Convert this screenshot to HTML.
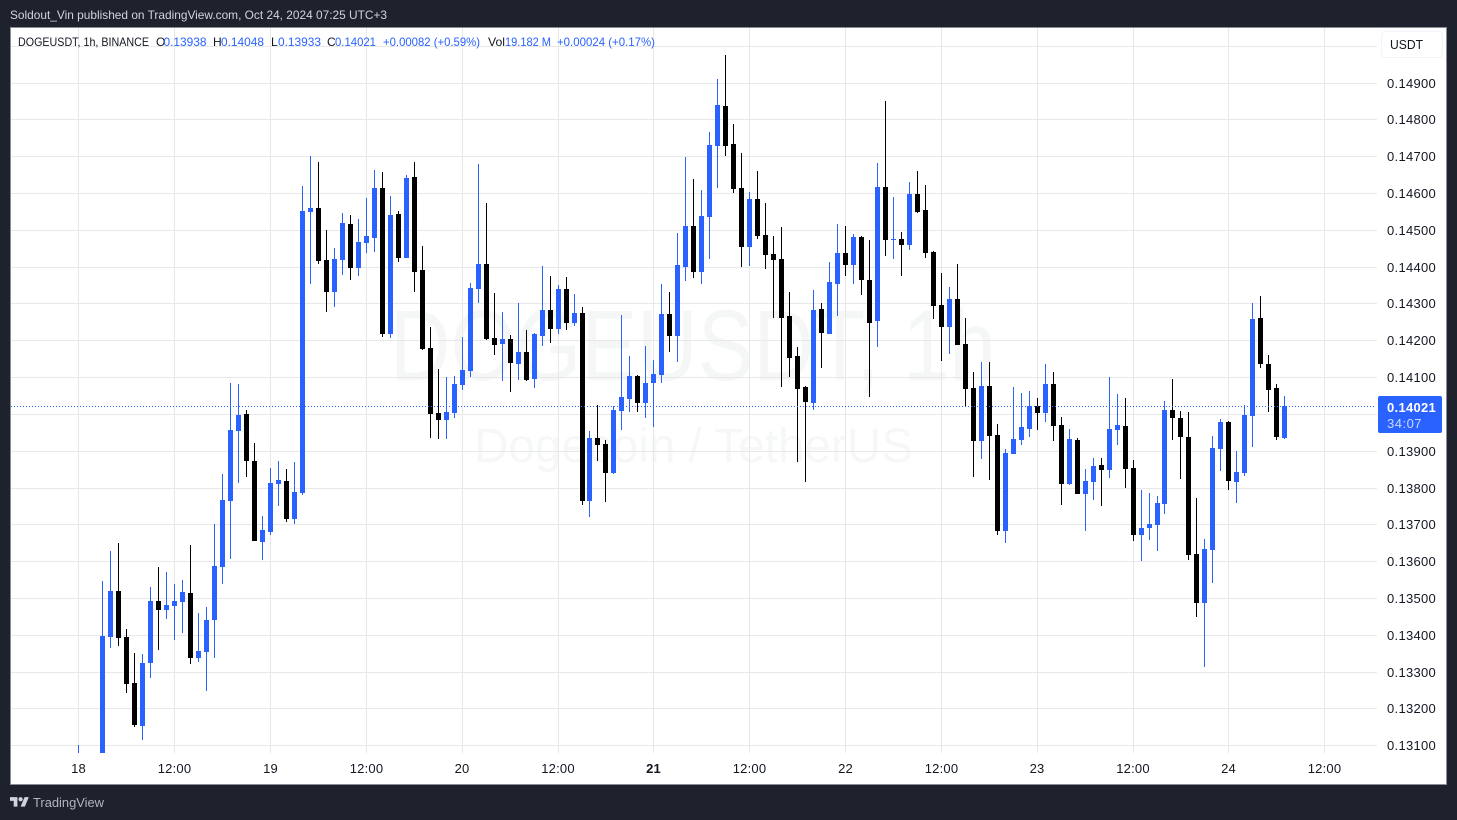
<!DOCTYPE html>
<html lang="en"><head><meta charset="utf-8"><title>DOGEUSDT</title>
<style>
html,body{margin:0;padding:0;background:#1e222d;width:1457px;height:820px;overflow:hidden}
svg{position:absolute;left:0;top:0;display:block}
text{font-family:"Liberation Sans",Arial,sans-serif}
.p{font-size:13px;fill:#131722;letter-spacing:.3px}
.t{font-size:13px;fill:#131722;text-anchor:middle;letter-spacing:.2px}
.l{font-size:12px;fill:#131722}
.v{font-size:12px;fill:#2962ff}
</style></head>
<body>
<svg width="1457" height="820" viewBox="0 0 1457 820">
<rect width="1457" height="820" fill="#1e222d"/>
<text x="10" y="19" font-size="12" fill="#d1d4dc" textLength="377" lengthAdjust="spacingAndGlyphs">Soldout_Vin published on TradingView.com, Oct 24, 2024 07:25 UTC+3</text>
<rect x="10.5" y="27.5" width="1436" height="757" fill="#fff" stroke="#8a8d95"/>

<!-- watermark -->
<text x="390" y="380" font-size="100" fill="#f5f7f7" textLength="606" lengthAdjust="spacingAndGlyphs">DOGEUSDT, 1h</text>
<text x="474" y="462" font-size="48" fill="#f6f8f8" textLength="439" lengthAdjust="spacingAndGlyphs">Dogecoin / TetherUS</text>

<!-- grid -->
<path shape-rendering="crispEdges" stroke="#e8e8e8" stroke-width="1" fill="none" d="M11 46.5H1377M11 83.5H1377M11 119.5H1377M11 156.5H1377M11 193.5H1377M11 230.5H1377M11 267.5H1377M11 303.5H1377M11 340.5H1377M11 377.5H1377M11 414.5H1377M11 451.5H1377M11 488.5H1377M11 524.5H1377M11 561.5H1377M11 598.5H1377M11 635.5H1377M11 672.5H1377M11 708.5H1377M11 745.5H1377M78.5 28V753M174.5 28V753M270.5 28V753M366.5 28V753M462.5 28V753M558.5 28V753M653.5 28V753M749.5 28V753M845.5 28V753M941.5 28V753M1037.5 28V753M1133.5 28V753M1228.5 28V753M1324.5 28V753"/>

<!-- blue wicks -->
<path shape-rendering="crispEdges" stroke="#2962ff" stroke-width="1" fill="none" d="M78.5 745V753M102.5 581V753M110.5 551V648M142.5 654V740M150.5 587V678M166.5 572V619M174.5 584V640M182.5 580V633M198.5 613V662M206.5 607V691M214.5 524V658M222.5 474V584M230.5 383V559M238.5 384V483M262.5 516V560M270.5 468V535M278.5 461V506M294.5 462V524M302.5 186V495M310.5 156V284M334.5 248V307M342.5 213V275M358.5 219V276M366.5 198V253M374.5 170V252M390.5 196V338M406.5 175V258M446.5 377V439M454.5 376V418M462.5 337V390M470.5 283V377M478.5 164V303M502.5 312V381M518.5 303V380M534.5 333V388M542.5 266V346M558.5 285V334M574.5 294V326M589.5 431V517M613.5 406V474M621.5 315V430M629.5 356V412M645.5 346V418M653.5 360V427M661.5 284V383M677.5 233V362M685.5 157V281M701.5 190V284M709.5 132V259M717.5 79V188M749.5 192V266M813.5 290V410M829.5 262V334M837.5 224V316M853.5 234V284M877.5 163V347M893.5 197V259M909.5 182V250M949.5 287V354M981.5 362V459M1005.5 449V543M1013.5 387V454M1021.5 393V445M1029.5 391V437M1045.5 364V422M1069.5 429V485M1085.5 469V531M1093.5 458V500M1109.5 377V478M1117.5 394V445M1141.5 490V561M1149.5 493V540M1157.5 496V551M1164.5 401V514M1204.5 539V667M1212.5 436V583M1220.5 419V471M1236.5 451V503M1244.5 405V476M1252.5 303V447M1284.5 396V439"/>
<!-- blue bodies -->
<path shape-rendering="crispEdges" fill="#2962ff" d="M100 636h5v117h-5zM108 591h5v46h-5zM140 663h5v63h-5zM148 601h5v62h-5zM164 605h5v5h-5zM172 601h5v5h-5zM180 592h5v10h-5zM196 651h5v7h-5zM204 620h5v32h-5zM212 566h5v54h-5zM220 500h5v67h-5zM228 430h5v71h-5zM236 415h5v16h-5zM260 530h5v12h-5zM268 483h5v49h-5zM276 480h5v4h-5zM292 492h5v27h-5zM300 211h5v282h-5zM308 208h5v4h-5zM332 259h5v33h-5zM340 223h5v37h-5zM356 242h5v26h-5zM364 236h5v7h-5zM372 188h5v50h-5zM388 215h5v119h-5zM404 178h5v80h-5zM444 412h5v8h-5zM452 384h5v29h-5zM460 370h5v15h-5zM468 288h5v83h-5zM476 264h5v25h-5zM500 339h5v5h-5zM516 352h5v12h-5zM532 334h5v45h-5zM540 310h5v26h-5zM556 289h5v40h-5zM572 313h5v10h-5zM587 438h5v63h-5zM611 410h5v63h-5zM619 397h5v14h-5zM627 376h5v23h-5zM643 383h5v20h-5zM651 374h5v9h-5zM659 314h5v61h-5zM675 265h5v71h-5zM683 226h5v41h-5zM699 216h5v56h-5zM707 145h5v72h-5zM715 105h5v41h-5zM747 199h5v48h-5zM811 310h5v93h-5zM827 282h5v52h-5zM835 253h5v31h-5zM851 237h5v28h-5zM875 187h5v134h-5zM891 239h5v1h-5zM907 194h5v51h-5zM947 299h5v28h-5zM979 386h5v55h-5zM1003 453h5v78h-5zM1011 439h5v15h-5zM1019 427h5v13h-5zM1027 406h5v23h-5zM1043 384h5v29h-5zM1067 439h5v45h-5zM1083 481h5v13h-5zM1091 466h5v16h-5zM1107 429h5v41h-5zM1115 425h5v5h-5zM1139 528h5v7h-5zM1147 524h5v4h-5zM1155 503h5v22h-5zM1162 410h5v94h-5zM1202 549h5v54h-5zM1210 448h5v102h-5zM1218 422h5v27h-5zM1234 472h5v10h-5zM1242 415h5v58h-5zM1250 319h5v97h-5zM1282 406h5v32h-5z"/>

<!-- black wicks -->
<path shape-rendering="crispEdges" stroke="#000" stroke-width="1" fill="none" d="M118.5 543V646M126.5 629V693M134.5 653V727M158.5 567V650M190.5 545V664M246.5 410V477M254.5 443V541M286.5 469V522M318.5 162V264M326.5 230V312M350.5 215V280M382.5 172V337M398.5 211V262M414.5 162V292M422.5 246V350M430.5 327V438M438.5 369V439M486.5 203V340M494.5 293V355M510.5 335V392M526.5 330V381M550.5 276V343M566.5 277V330M582.5 307V505M597.5 405V461M605.5 440V502M637.5 375V412M669.5 292V352M693.5 179V278M725.5 55V156M733.5 124V193M741.5 153V267M757.5 171V239M765.5 203V269M773.5 236V318M781.5 227V387M789.5 292V377M797.5 347V462M805.5 386V482M821.5 303V368M845.5 226V276M861.5 236V295M869.5 240V397M885.5 101V256M901.5 232V276M917.5 171V213M925.5 185V258M933.5 251V319M941.5 273V361M957.5 264V345M965.5 318V407M973.5 372V477M989.5 362V480M997.5 424V535M1037.5 398V430M1053.5 372V441M1061.5 417V505M1077.5 438V494M1101.5 458V506M1125.5 398V488M1133.5 460V541M1172.5 379V440M1180.5 411V479M1188.5 412V560M1196.5 498V617M1228.5 421V490M1260.5 296V368M1268.5 355V412M1276.5 384V440"/>
<!-- black bodies -->
<path shape-rendering="crispEdges" fill="#000" d="M116 591h5v47h-5zM124 637h5v47h-5zM132 683h5v42h-5zM156 601h5v9h-5zM188 593h5v65h-5zM244 414h5v47h-5zM252 461h5v80h-5zM284 481h5v38h-5zM316 208h5v53h-5zM324 260h5v32h-5zM348 224h5v44h-5zM380 188h5v146h-5zM396 214h5v44h-5zM412 177h5v95h-5zM420 270h5v79h-5zM428 348h5v66h-5zM436 413h5v7h-5zM484 264h5v75h-5zM492 338h5v7h-5zM508 339h5v24h-5zM524 352h5v28h-5zM548 310h5v19h-5zM564 289h5v34h-5zM580 313h5v188h-5zM595 438h5v7h-5zM603 444h5v29h-5zM635 376h5v27h-5zM667 314h5v22h-5zM691 226h5v46h-5zM723 106h5v40h-5zM731 144h5v45h-5zM739 188h5v59h-5zM755 199h5v37h-5zM763 235h5v20h-5zM771 254h5v6h-5zM779 259h5v59h-5zM787 316h5v42h-5zM795 356h5v33h-5zM803 387h5v15h-5zM819 309h5v24h-5zM843 253h5v12h-5zM859 237h5v43h-5zM867 280h5v43h-5zM883 187h5v53h-5zM899 239h5v6h-5zM915 194h5v18h-5zM923 210h5v43h-5zM931 252h5v54h-5zM939 305h5v22h-5zM955 299h5v46h-5zM963 344h5v45h-5zM971 388h5v53h-5zM987 386h5v50h-5zM995 435h5v96h-5zM1035 406h5v7h-5zM1051 384h5v42h-5zM1059 425h5v59h-5zM1075 440h5v54h-5zM1099 465h5v5h-5zM1123 426h5v43h-5zM1131 468h5v67h-5zM1170 410h5v8h-5zM1178 418h5v19h-5zM1186 437h5v118h-5zM1194 554h5v49h-5zM1226 422h5v59h-5zM1258 318h5v46h-5zM1266 364h5v26h-5zM1274 388h5v49h-5z"/>

<!-- last price line -->
<path shape-rendering="crispEdges" stroke="#2962ff" stroke-width="1" stroke-dasharray="1 2" fill="none" d="M11 406.5H1376"/>

<!-- legend -->
<text class="l" x="18" y="46" textLength="131" lengthAdjust="spacingAndGlyphs">DOGEUSDT, 1h, BINANCE</text>
<text class="l" x="156" y="46">O</text><text class="v" x="163.5" y="46" textLength="43" lengthAdjust="spacingAndGlyphs">0.13938</text>
<text class="l" x="213" y="46">H</text><text class="v" x="221" y="46" textLength="43" lengthAdjust="spacingAndGlyphs">0.14048</text>
<text class="l" x="271" y="46">L</text><text class="v" x="278" y="46" textLength="43" lengthAdjust="spacingAndGlyphs">0.13933</text>
<text class="l" x="327" y="46">C</text><text class="v" x="335" y="46" textLength="41" lengthAdjust="spacingAndGlyphs">0.14021</text>
<text class="v" x="383" y="46" textLength="97" lengthAdjust="spacingAndGlyphs">+0.00082 (+0.59%)</text>
<text class="l" x="488" y="46" textLength="17" lengthAdjust="spacingAndGlyphs">Vol</text><text class="v" x="505" y="46" textLength="46" lengthAdjust="spacingAndGlyphs">19.182 M</text>
<text class="v" x="557" y="46" textLength="98" lengthAdjust="spacingAndGlyphs">+0.00024 (+0.17%)</text>

<!-- USDT button -->
<rect x="1381.5" y="31.5" width="61" height="26" rx="4" fill="#fff" stroke="#f0f3fa"/>
<text x="1390" y="49" font-size="13" fill="#131722" textLength="33" lengthAdjust="spacingAndGlyphs">USDT</text>

<!-- price axis -->
<text class="p" x="1387" y="88">0.14900</text>
<text class="p" x="1387" y="124">0.14800</text>
<text class="p" x="1387" y="161">0.14700</text>
<text class="p" x="1387" y="198">0.14600</text>
<text class="p" x="1387" y="235">0.14500</text>
<text class="p" x="1387" y="272">0.14400</text>
<text class="p" x="1387" y="308">0.14300</text>
<text class="p" x="1387" y="345">0.14200</text>
<text class="p" x="1387" y="382">0.14100</text>
<text class="p" x="1387" y="456">0.13900</text>
<text class="p" x="1387" y="493">0.13800</text>
<text class="p" x="1387" y="529">0.13700</text>
<text class="p" x="1387" y="566">0.13600</text>
<text class="p" x="1387" y="603">0.13500</text>
<text class="p" x="1387" y="640">0.13400</text>
<text class="p" x="1387" y="677">0.13300</text>
<text class="p" x="1387" y="713">0.13200</text>
<text class="p" x="1387" y="750">0.13100</text>
<rect x="1378" y="396" width="64" height="37" rx="2" fill="#2962ff"/>
<text x="1387" y="412" font-size="13" font-weight="700" fill="#fff" letter-spacing=".3">0.14021</text>
<text x="1387" y="428" font-size="13" fill="#fff" fill-opacity=".75" letter-spacing=".5">34:07</text>

<!-- time axis -->
<text class="t" x="78.5" y="773">18</text>
<text class="t" x="174.5" y="773">12:00</text>
<text class="t" x="270.5" y="773">19</text>
<text class="t" x="366.5" y="773">12:00</text>
<text class="t" x="462" y="773">20</text>
<text class="t" x="558" y="773">12:00</text>
<text class="t" x="653.5" y="773" font-weight="700">21</text>
<text class="t" x="749.5" y="773">12:00</text>
<text class="t" x="845.5" y="773">22</text>
<text class="t" x="941.5" y="773">12:00</text>
<text class="t" x="1037" y="773">23</text>
<text class="t" x="1133" y="773">12:00</text>
<text class="t" x="1228.5" y="773">24</text>
<text class="t" x="1324.5" y="773">12:00</text>

<!-- footer logo -->
<g transform="translate(10,795) scale(.53)" fill="#d1d4dc"><path d="M14 22H7V11H0V4h14v18zM28 22h-8l7.5-18h8L28 22z"/><circle cx="20" cy="8" r="4"/></g>
<text x="33" y="807" font-size="13" fill="#b2b5be" textLength="71" lengthAdjust="spacingAndGlyphs">TradingView</text>
</svg>
</body></html>
